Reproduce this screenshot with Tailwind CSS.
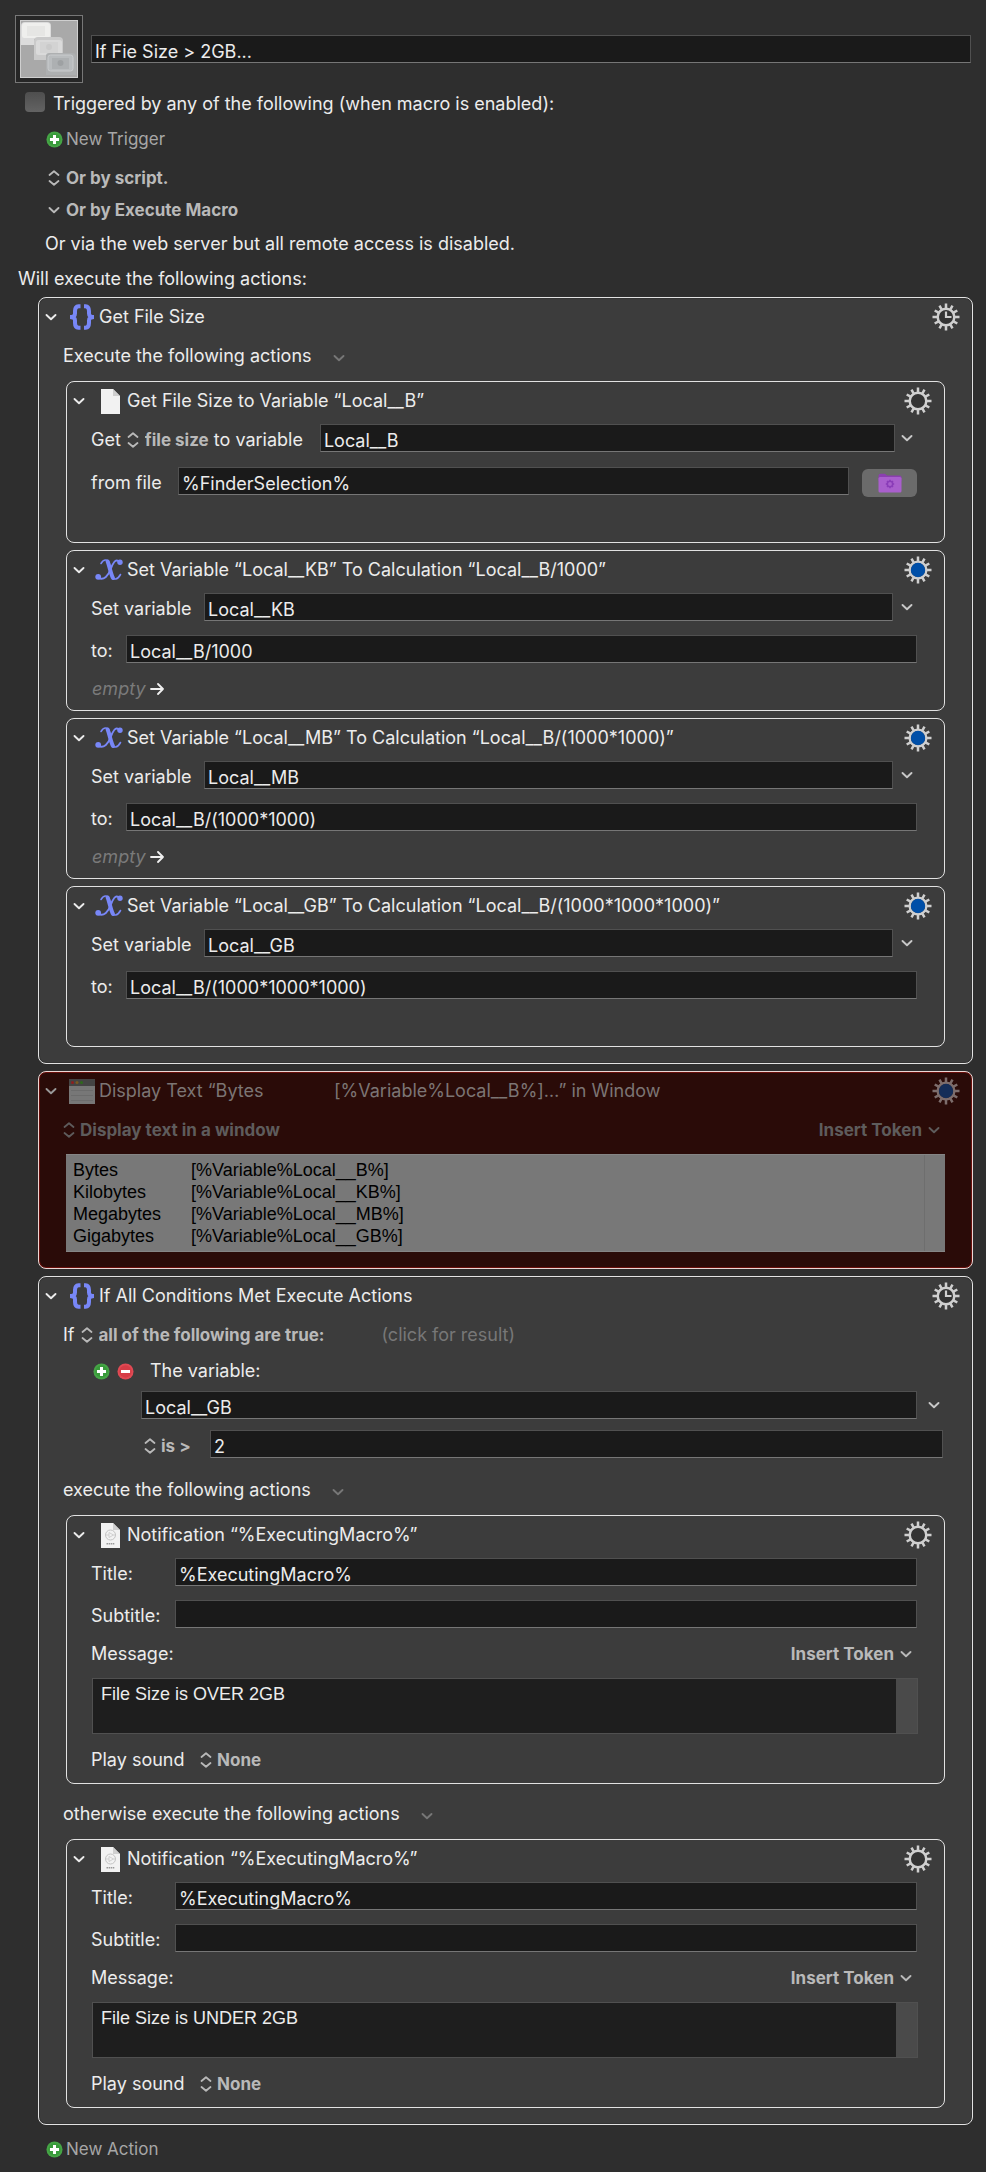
<!DOCTYPE html>
<html lang="en">
<head>
<meta charset="utf-8">
<meta name="viewport" content="width=device-width, initial-scale=1">
<title>If Fie Size &gt; 2GB...</title>
<script src="https://cdn.jsdelivr.net/npm/@tailwindcss/browser@4"></script>
</head>
<body class="bg-[#2e2e2e] font-[Inter,'Liberation_Sans',sans-serif] text-[18px] leading-6 text-[#ececec] [font-feature-settings:'calt'_0]">

<svg class="hidden" aria-hidden="true">
  <symbol id="chev" viewBox="0 0 12 8"><path d="M1.500 2 6 6.200 10.500 2" fill="none" stroke="currentColor" stroke-width="1.900" stroke-linecap="round" stroke-linejoin="round"/></symbol>
  <symbol id="updown" viewBox="0 0 12 16"><path d="M1.500 5 6 1.200l4.500 3.800M1.500 11 6 14.800l4.500-3.800" fill="none" stroke="currentColor" stroke-width="1.800" stroke-linecap="round" stroke-linejoin="round"/></symbol>
  <symbol id="braces" viewBox="0 0 26 26"><path d="M11.500 2.200H9.500Q6 2.500 6 7V9.500Q6 13 1 13Q6 13 6 16.500V19Q6 23.500 9.500 23.800H11.500M15 2.200H16.500Q20 2.500 20 7V9.500Q20 13 25 13Q20 13 20 16.500V19Q20 23.500 16.500 23.800H15" fill="none" stroke="#7887f7" stroke-width="4"/></symbol>
  <symbol id="scriptx" viewBox="0 0 28 24"><g fill="none" stroke="#7887f7" stroke-linecap="round"><path d="M6 5.500C8.500 1 13 .5 14.300 5.500L17 18C18 22.500 22.500 22 25.500 16.500" stroke-width="1.600"/><path d="M12.600 3.500C14 6 15.800 16.500 18 20" stroke-width="4"/><path d="M24.500 4C20.500-.5 17.500 6 15.500 11.500S9 23 3.500 20" stroke-width="1.900"/></g><circle cx="25" cy="4.200" r="2.700" fill="#7887f7"/><circle cx="3.200" cy="18.800" r="2.900" fill="#7887f7"/></symbol>
  <symbol id="gear" viewBox="-14 -14 28 28"><path d="M0-8.500V-13.500M0 8.500V13.500M8.500 0H13.500M-8.500 0H-13.500M4.300-7.400 6.500-11.300M7.400-4.300 11.300-6.500M-4.300-7.400-6.500-11.300M-7.400-4.300-11.300-6.500M4.300 7.400 6.500 11.300M7.400 4.300 11.300 6.500M-4.300 7.400-6.500 11.300M-7.400 4.300-11.300 6.500" stroke="#cfcfcf" stroke-width="2.500"/><circle r="8.300" fill="#333" stroke="#cfcfcf" stroke-width="2.500"/></symbol>
  <symbol id="gearclock" viewBox="-14 -14 28 28"><use href="#gear" x="-14" y="-14" width="28" height="28"/><path d="M0-5.500V0H5.500" fill="none" stroke="#cfcfcf" stroke-width="2.200"/></symbol>
  <symbol id="gearblue" viewBox="-14 -14 28 28"><use href="#gear" x="-14" y="-14" width="28" height="28"/><circle r="7.200" fill="#004fa8"/></symbol>
  <symbol id="plus" viewBox="0 0 18 18"><circle cx="9" cy="9" r="8.500" fill="#46a546"/><circle cx="9" cy="9" r="6.500" fill="#389a3a"/><path d="M9 4.200V13.800M4.200 9H13.800" stroke="#fff" stroke-width="3.200"/></symbol>
  <symbol id="minus" viewBox="0 0 18 18"><circle cx="9" cy="9" r="8.500" fill="#e04a54"/><circle cx="9" cy="9" r="6.500" fill="#d63c46"/><path d="M4.200 9H13.800" stroke="#fff" stroke-width="3.200"/></symbol>
  <symbol id="page" viewBox="0 0 19 25"><path d="M0 0H12L19 7V25H0Z" fill="#f2f2f2"/><path d="M12 0V7H19Z" fill="#cfcfcf"/></symbol>
  <symbol id="pref" viewBox="0 0 19 25"><use href="#page" width="19" height="25"/><circle cx="9.500" cy="12" r="5" fill="none" stroke="#c4c4c4"/><path d="M8 9.500 12.500 12 8 14.500ZM4.500 12H8M12.500 12H14.500" fill="none" stroke="#c8c8c8" stroke-width=".8"/><path d="M5.500 20.800H13.500" stroke="#999" stroke-width="1.600" stroke-dasharray="1.500 .6"/></symbol>
</svg>

<main class="pt-[15px] pb-2">
  <header class="flex items-center gap-2 px-[15px]">
    <button class="size-[68px] shrink-0 border border-[#777] bg-[#262626] p-[4px]" aria-label="Macro icon">
      <svg class="block size-full" viewBox="0 0 58 58"><rect width="58" height="58" fill="#a9a9a9"/><path d="M1 25V6Q1 2 5 2H27Q31 2 31 6V19H14V25Z" fill="#dcdcdc"/><rect x="2" y="3" width="28" height="15" rx="2.500" fill="#efefed"/><rect x="7" y="6" width="18" height="10" fill="#e6e6e4"/><path d="M14 40V21Q14 17 18 17H39Q43 17 43 21V34H26V40Z" fill="#cacaca"/><rect x="16" y="20" width="26" height="15" rx="2.500" fill="#dadada"/><rect x="20" y="22" width="18" height="11" fill="#d3d3d3"/><circle cx="29" cy="27" r="3" fill="#cacaca"/><path d="M26 55V36Q26 33 29 33H52Q56 33 56 37V55Z" fill="#aeb0b1"/><rect x="28" y="35" width="25" height="16" rx="2.500" fill="#b9bcbe" stroke="#c9cbcd"/><rect x="32" y="38" width="17" height="11" fill="#adb0b2"/><circle cx="40.500" cy="43" r="3" fill="#9ea1a3"/><rect x=".5" y=".5" width="57" height="57" fill="none" stroke="#cfcfcf"/></svg>
    </button>
    <input type="text" aria-label="Macro name" value="If Fie Size &gt; 2GB..." class="h-7 min-w-0 flex-1 border border-[#505050] border-b-[#767676] bg-[#1a1a1a] pt-1 pl-[3px]">
  </header>

  <section>
    <label class="mt-2 ml-[25px] flex h-[26px] items-center gap-2">
      <input type="checkbox" class="mb-1 size-5 appearance-none rounded bg-linear-to-b from-[#4e4e4e] to-[#636363]">
      Triggered by any of the following (when macro is enabled):
    </label>
    <button class="mt-[9px] ml-[46px] flex h-[26px] items-center gap-[3px] text-[17px] text-[#a6a6a6]"><svg class="size-[17px]"><use href="#plus"/></svg>New Trigger</button>
    <button class="mt-[13px] ml-[48px] flex h-[26px] items-center gap-[6px] text-[17px] font-bold text-[#b9b9b9]"><svg class="h-4 w-3"><use href="#updown"/></svg>Or by script.</button>
    <button class="mt-[6px] ml-[48px] flex h-[26px] items-center gap-[6px] text-[17px] font-bold text-[#b9b9b9]"><svg class="h-2 w-3"><use href="#chev"/></svg>Or by Execute Macro</button>
    <p class="mt-[9px] ml-[45px] h-[26px]">Or via the web server but all remote access is disabled.</p>
    <p class="mt-[9px] ml-[18px] h-[26px]">Will execute the following actions:</p>
  </section>

  <div class="mt-1 mr-[13px] ml-[38px] flex flex-col gap-[7px]">

    <!-- Group: Get File Size -->
    <section class="rounded-lg border border-[#e2e2e2] bg-[#3c3c3c] pb-4 shadow-[inset_0_0_0_1px_#343434]">
      <div class="flex h-[38px] items-center pr-3 pl-[6px]">
        <button aria-label="Collapse"><svg class="h-2 w-3"><use href="#chev"/></svg></button>
        <svg class="mr-1 ml-[12px] size-[26px]"><use href="#braces"/></svg>
        <h2 class="flex-1">Get File Size</h2>
        <button aria-label="Action menu"><svg class="block size-7"><use href="#gearclock"/></svg></button>
      </div>
      <div class="mb-[5px] flex h-10 items-center gap-[21px] pl-6">Execute the following actions
        <button aria-label="Group options" class="mt-1 text-[#777]"><svg class="block h-2 w-3"><use href="#chev"/></svg></button>
      </div>
      <div class="mx-[27px] flex flex-col gap-[7px]">

        <section class="rounded-lg border border-[#e2e2e2] bg-[#3c3c3c] pb-[47px]">
          <div class="flex h-[38px] items-center pr-3 pl-[6px]">
            <button aria-label="Collapse"><svg class="h-2 w-3"><use href="#chev"/></svg></button>
            <svg class="mr-[7px] ml-[16px] h-[25px] w-[19px]"><use href="#page"/></svg>
            <h3 class="flex-1">Get File Size to Variable “Local__B”</h3>
            <button aria-label="Action menu"><svg class="block size-7"><use href="#gear"/></svg></button>
          </div>
          <div class="mt-1 flex h-7 items-center pr-[27px] pl-6">
            <span class="pt-1">Get</span>
            <svg class="mx-[6px] mt-1 h-4 w-3 text-[#b9b9b9]"><use href="#updown"/></svg>
            <select aria-label="File attribute" class="appearance-none pt-1 text-[17px] font-bold text-[#b9b9b9]"><option>file size</option></select>
            <label for="v0" class="flex-none pt-1 pr-[17px] pl-[5px]">to variable</label>
            <input id="v0" type="text" value="Local__B" class="h-7 min-w-0 flex-1 border border-[#505050] border-b-[#767676] bg-[#1a1a1a] pt-1 pl-[3px]">
            <button aria-label="Choose variable" class="mr-1 ml-[6px] text-[#c8c8c8]"><svg class="block h-2 w-3"><use href="#chev"/></svg></button>
          </div>
          <div class="mt-[15px] flex h-7 items-center pr-[27px] pl-6">
            <label for="f0" class="w-[87px] pt-1">from file</label>
            <input id="f0" type="text" value="%FinderSelection%" class="h-7 min-w-0 flex-1 border border-[#505050] border-b-[#767676] bg-[#1a1a1a] pt-1 pl-[3px]">
            <button aria-label="Choose file" class="mt-1 ml-[13px] flex h-7 w-[55px] items-center justify-center rounded-md bg-[#6b6b6b]">
              <svg class="h-5 w-6" viewBox="0 0 24 20"><path d="M.5 3Q.5.800 2.500.800H7L9 2.500H21.500Q23.500 2.500 23.500 4.500V8H.5Z" fill="#8b3fb0"/><rect x=".5" y="4" width="23" height="15.500" rx="1.500" fill="#a95fcd"/><g fill="none" stroke="#8a3db8"><circle cx="12" cy="11" r="2.700" stroke-width="1.600"/><path d="M12 6.800V8.300M12 13.700V15.200M7.800 11H9.300M14.700 11H16.200M9 8 10 9M14 13 15 14M15 8 14 9M10 13 9 14" stroke-width="1.500"/></g></svg>
            </button>
          </div>
        </section>

        <section class="rounded-lg border border-[#e2e2e2] bg-[#3c3c3c] pb-[9px]">
          <div class="flex h-[38px] items-center pr-3 pl-[6px]">
            <button aria-label="Collapse"><svg class="h-2 w-3"><use href="#chev"/></svg></button>
            <svg class="mr-1 ml-[10px] h-6 w-7"><use href="#scriptx"/></svg>
            <h3 class="flex-1">Set Variable “Local__KB” To Calculation “Local__B/1000”</h3>
            <button aria-label="Action menu"><svg class="block size-7"><use href="#gearblue"/></svg></button>
          </div>
          <div class="mt-1 flex h-7 items-center pr-[27px] pl-6">
            <label for="v1" class="w-[113px] pt-1">Set variable</label>
            <input id="v1" type="text" value="Local__KB" class="h-7 min-w-0 flex-1 border border-[#505050] border-b-[#767676] bg-[#1a1a1a] pt-1 pl-[3px]">
            <button aria-label="Choose variable" class="mr-1 ml-2 text-[#c8c8c8]"><svg class="block h-2 w-3"><use href="#chev"/></svg></button>
          </div>
          <div class="mt-[14px] flex h-7 items-center pr-[27px] pl-6">
            <label for="c1" class="w-[35px] pt-1">to:</label>
            <input id="c1" type="text" value="Local__B/1000" class="h-7 min-w-0 flex-1 border border-[#505050] border-b-[#767676] bg-[#1a1a1a] pt-1 pl-[3px]">
          </div>
          <button class="mt-[14px] ml-[25px] flex h-6 items-center gap-1 text-[#7a7a7a] italic">empty <svg class="h-3 w-[14px]" viewBox="0 0 14 12"><path d="M1 6H13M8 1 13 6 8 11" fill="none" stroke="#f0f0f0" stroke-width="1.800" stroke-linecap="round" stroke-linejoin="round"/></svg></button>
        </section>

        <section class="rounded-lg border border-[#e2e2e2] bg-[#3c3c3c] pb-[9px]">
          <div class="flex h-[38px] items-center pr-3 pl-[6px]">
            <button aria-label="Collapse"><svg class="h-2 w-3"><use href="#chev"/></svg></button>
            <svg class="mr-1 ml-[10px] h-6 w-7"><use href="#scriptx"/></svg>
            <h3 class="flex-1">Set Variable “Local__MB” To Calculation “Local__B/(1000*1000)”</h3>
            <button aria-label="Action menu"><svg class="block size-7"><use href="#gearblue"/></svg></button>
          </div>
          <div class="mt-1 flex h-7 items-center pr-[27px] pl-6">
            <label for="v2" class="w-[113px] pt-1">Set variable</label>
            <input id="v2" type="text" value="Local__MB" class="h-7 min-w-0 flex-1 border border-[#505050] border-b-[#767676] bg-[#1a1a1a] pt-1 pl-[3px]">
            <button aria-label="Choose variable" class="mr-1 ml-2 text-[#c8c8c8]"><svg class="block h-2 w-3"><use href="#chev"/></svg></button>
          </div>
          <div class="mt-[14px] flex h-7 items-center pr-[27px] pl-6">
            <label for="c2" class="w-[35px] pt-1">to:</label>
            <input id="c2" type="text" value="Local__B/(1000*1000)" class="h-7 min-w-0 flex-1 border border-[#505050] border-b-[#767676] bg-[#1a1a1a] pt-1 pl-[3px]">
          </div>
          <button class="mt-[14px] ml-[25px] flex h-6 items-center gap-1 text-[#7a7a7a] italic">empty <svg class="h-3 w-[14px]" viewBox="0 0 14 12"><path d="M1 6H13M8 1 13 6 8 11" fill="none" stroke="#f0f0f0" stroke-width="1.800" stroke-linecap="round" stroke-linejoin="round"/></svg></button>
        </section>

        <section class="rounded-lg border border-[#e2e2e2] bg-[#3c3c3c] pb-[47px]">
          <div class="flex h-[38px] items-center pr-3 pl-[6px]">
            <button aria-label="Collapse"><svg class="h-2 w-3"><use href="#chev"/></svg></button>
            <svg class="mr-1 ml-[10px] h-6 w-7"><use href="#scriptx"/></svg>
            <h3 class="flex-1">Set Variable “Local__GB” To Calculation “Local__B/(1000*1000*1000)”</h3>
            <button aria-label="Action menu"><svg class="block size-7"><use href="#gearblue"/></svg></button>
          </div>
          <div class="mt-1 flex h-7 items-center pr-[27px] pl-6">
            <label for="v3" class="w-[113px] pt-1">Set variable</label>
            <input id="v3" type="text" value="Local__GB" class="h-7 min-w-0 flex-1 border border-[#505050] border-b-[#767676] bg-[#1a1a1a] pt-1 pl-[3px]">
            <button aria-label="Choose variable" class="mr-1 ml-2 text-[#c8c8c8]"><svg class="block h-2 w-3"><use href="#chev"/></svg></button>
          </div>
          <div class="mt-[14px] flex h-7 items-center pr-[27px] pl-6">
            <label for="c3" class="w-[35px] pt-1">to:</label>
            <input id="c3" type="text" value="Local__B/(1000*1000*1000)" class="h-7 min-w-0 flex-1 border border-[#505050] border-b-[#767676] bg-[#1a1a1a] pt-1 pl-[3px]">
          </div>
        </section>
      </div>
    </section>

    <!-- Disabled action: Display Text -->
    <section class="rounded-lg border border-[#ecd8d6] bg-[#2a0b08] pb-4 text-[#7c7574] shadow-[inset_0_0_0_1px_#6a0f0b]">
      <div class="flex h-[38px] items-center pr-3 pl-[6px]">
        <button aria-label="Collapse" class="text-[#999]"><svg class="h-2 w-3"><use href="#chev"/></svg></button>
        <svg class="mr-1 ml-[12px] h-[25px] w-[26px]" viewBox="0 0 26 25"><rect width="26" height="25" fill="#777"/><rect width="26" height="7" fill="#444"/><circle cx="3.500" cy="3.500" r="1.500" fill="#8e1e1e"/><circle cx="8" cy="3.500" r="1.500" fill="#7a5a20"/><circle cx="12.500" cy="3.500" r="1.500" fill="#2f6a1c"/><path d="M2 11.500H24M2 16.500H24M2 21.500H24" stroke="#6c6c6c"/></svg>
        <h2 class="flex-1 whitespace-pre [tab-size:235px]">Display Text “Bytes	[%Variable%Local__B%]…” in Window</h2>
        <button aria-label="Action menu" class="opacity-50"><svg class="block size-7"><use href="#gearblue"/></svg></button>
      </div>
      <div class="flex h-10 items-center pr-8 pl-6 text-[17px] font-bold text-[#5e5c5c]">
        <svg class="mr-[5px] h-4 w-3"><use href="#updown"/></svg>
        <select aria-label="Display mode" class="appearance-none"><option>Display text in a window</option></select>
        <button class="ml-auto flex items-center gap-[6px]">Insert Token<svg class="h-2 w-3"><use href="#chev"/></svg></button>
      </div>
      <div class="mx-[27px] mt-1 flex h-[98px] border-y border-[#858585] bg-[#787878]">
        <textarea aria-label="Text to display" class="block flex-1 resize-none overflow-hidden pt-1 pl-[7px] font-['Liberation_Sans',Arial,sans-serif] text-[18px] leading-[22px] text-black [tab-size:118px]">Bytes	[%Variable%Local__B%]
Kilobytes	[%Variable%Local__KB%]
Megabytes	[%Variable%Local__MB%]
Gigabytes	[%Variable%Local__GB%]</textarea>
        <div class="w-[21px] border-l border-[#6e6e6e]"></div>
      </div>
    </section>

    <!-- Conditional -->
    <section class="rounded-lg border border-[#e2e2e2] bg-[#3c3c3c] pb-4 shadow-[inset_0_0_0_1px_#343434]">
      <div class="flex h-[38px] items-center pr-3 pl-[6px]">
        <button aria-label="Collapse"><svg class="h-2 w-3"><use href="#chev"/></svg></button>
        <svg class="mr-1 ml-[12px] size-[26px]"><use href="#braces"/></svg>
        <h2 class="flex-1">If All Conditions Met Execute Actions</h2>
        <button aria-label="Action menu"><svg class="block size-7"><use href="#gearclock"/></svg></button>
      </div>
      <div class="flex h-10 items-center pl-6">If
        <svg class="mx-[6px] h-4 w-3 text-[#b9b9b9]"><use href="#updown"/></svg>
        <select aria-label="Match mode" class="w-[283px] appearance-none text-[17px] font-bold text-[#b9b9b9]"><option>all of the following are true:</option></select>
        <button class="text-[#777]">(click for result)</button>
      </div>
      <div class="flex h-8 items-center pl-[54px]">
        <button aria-label="Add condition"><svg class="block size-[17px]"><use href="#plus"/></svg></button>
        <button aria-label="Remove condition" class="ml-[7px]"><svg class="block size-[17px]"><use href="#minus"/></svg></button>
        <label for="cv" class="ml-4">The variable:</label>
      </div>
      <div class="mt-1 flex h-7 items-center pr-8 pl-[102px]">
        <input id="cv" type="text" value="Local__GB" class="h-7 min-w-0 flex-1 border border-[#505050] border-b-[#767676] bg-[#1a1a1a] pt-1 pl-[3px]">
        <button aria-label="Choose variable" class="ml-[11px] text-[#c8c8c8]"><svg class="block h-2 w-3"><use href="#chev"/></svg></button>
      </div>
      <div class="mt-[11px] flex h-7 items-center pr-[29px] pl-[105px] text-[#b9b9b9]">
        <svg class="mt-1 mr-[5px] h-4 w-3"><use href="#updown"/></svg>
        <select aria-label="Comparison" class="w-[49px] appearance-none pt-1 text-[17px] font-bold"><option>is &gt;</option></select>
        <input type="text" aria-label="Compare value" value="2" class="h-7 min-w-0 flex-1 border border-[#505050] border-b-[#767676] bg-[#1a1a1a] pt-1 pl-[3px] text-[#ececec]">
      </div>
      <div class="mt-3 mb-[5px] flex h-10 items-center gap-[21px] pl-6">execute the following actions
        <button aria-label="Group options" class="mt-1 text-[#777]"><svg class="block h-2 w-3"><use href="#chev"/></svg></button>
      </div>

      <section class="mx-[27px] rounded-lg border border-[#e2e2e2] bg-[#3c3c3c] pb-[11px]">
        <div class="flex h-[38px] items-center pr-3 pl-[6px]">
          <button aria-label="Collapse"><svg class="h-2 w-3"><use href="#chev"/></svg></button>
          <svg class="mr-[7px] ml-[16px] h-[25px] w-[19px]"><use href="#pref"/></svg>
          <h3 class="flex-1">Notification “%ExecutingMacro%”</h3>
          <button aria-label="Action menu"><svg class="block size-7"><use href="#gear"/></svg></button>
        </div>
        <div class="mt-1 flex h-7 items-center pr-[27px] pl-6">
          <label for="t1" class="w-[84px] pt-1">Title:</label>
          <input id="t1" type="text" value="%ExecutingMacro%" class="h-7 min-w-0 flex-1 border border-[#505050] border-b-[#767676] bg-[#1a1a1a] pt-1 pl-[3px]">
        </div>
        <div class="mt-[14px] flex h-7 items-center pr-[27px] pl-6">
          <label for="s1" class="w-[84px] pt-1">Subtitle:</label>
          <input id="s1" type="text" value="" class="h-7 min-w-0 flex-1 border border-[#505050] border-b-[#767676] bg-[#1a1a1a] pt-1 pl-[3px]">
        </div>
        <div class="mt-[14px] flex h-6 items-center justify-between pr-8 pl-6">
          <label for="m1">Message:</label>
          <button class="flex items-center gap-[6px] text-[17px] font-bold text-[#b9b9b9]">Insert Token<svg class="h-2 w-3"><use href="#chev"/></svg></button>
        </div>
        <div class="mt-3 mr-[26px] ml-[25px] flex h-14 border border-[#505050] bg-[#1e1e1e]">
          <textarea id="m1" class="block flex-1 resize-none overflow-hidden pt-1 pl-2 font-['Liberation_Sans',Arial,sans-serif] text-[18px] leading-[22px]">File Size is OVER 2GB</textarea>
          <div class="w-[21px] bg-[#4a4a4a]"></div>
        </div>
        <div class="mt-[14px] flex h-6 items-center pl-6">
          <label for="p1" class="w-[109px]">Play sound</label>
          <svg class="mr-[5px] h-4 w-3 text-[#b9b9b9]"><use href="#updown"/></svg>
          <select id="p1" class="appearance-none text-[17px] font-bold text-[#b9b9b9]"><option>None</option></select>
        </div>
      </section>

      <div class="mt-[10px] mb-[5px] flex h-10 items-center gap-[21px] pl-6">otherwise execute the following actions
        <button aria-label="Group options" class="mt-1 text-[#777]"><svg class="block h-2 w-3"><use href="#chev"/></svg></button>
      </div>

      <section class="mx-[27px] rounded-lg border border-[#e2e2e2] bg-[#3c3c3c] pb-[11px]">
        <div class="flex h-[38px] items-center pr-3 pl-[6px]">
          <button aria-label="Collapse"><svg class="h-2 w-3"><use href="#chev"/></svg></button>
          <svg class="mr-[7px] ml-[16px] h-[25px] w-[19px]"><use href="#pref"/></svg>
          <h3 class="flex-1">Notification “%ExecutingMacro%”</h3>
          <button aria-label="Action menu"><svg class="block size-7"><use href="#gear"/></svg></button>
        </div>
        <div class="mt-1 flex h-7 items-center pr-[27px] pl-6">
          <label for="t2" class="w-[84px] pt-1">Title:</label>
          <input id="t2" type="text" value="%ExecutingMacro%" class="h-7 min-w-0 flex-1 border border-[#505050] border-b-[#767676] bg-[#1a1a1a] pt-1 pl-[3px]">
        </div>
        <div class="mt-[14px] flex h-7 items-center pr-[27px] pl-6">
          <label for="s2" class="w-[84px] pt-1">Subtitle:</label>
          <input id="s2" type="text" value="" class="h-7 min-w-0 flex-1 border border-[#505050] border-b-[#767676] bg-[#1a1a1a] pt-1 pl-[3px]">
        </div>
        <div class="mt-[14px] flex h-6 items-center justify-between pr-8 pl-6">
          <label for="m2">Message:</label>
          <button class="flex items-center gap-[6px] text-[17px] font-bold text-[#b9b9b9]">Insert Token<svg class="h-2 w-3"><use href="#chev"/></svg></button>
        </div>
        <div class="mt-3 mr-[26px] ml-[25px] flex h-14 border border-[#505050] bg-[#1e1e1e]">
          <textarea id="m2" class="block flex-1 resize-none overflow-hidden pt-1 pl-2 font-['Liberation_Sans',Arial,sans-serif] text-[18px] leading-[22px]">File Size is UNDER 2GB</textarea>
          <div class="w-[21px] bg-[#4a4a4a]"></div>
        </div>
        <div class="mt-[14px] flex h-6 items-center pl-6">
          <label for="p2" class="w-[109px]">Play sound</label>
          <svg class="mr-[5px] h-4 w-3 text-[#b9b9b9]"><use href="#updown"/></svg>
          <select id="p2" class="appearance-none text-[17px] font-bold text-[#b9b9b9]"><option>None</option></select>
        </div>
      </section>
    </section>
  </div>

  <button class="mt-[11px] ml-[46px] flex h-[26px] items-center gap-[3px] text-[17px] text-[#a6a6a6]"><svg class="size-[17px]"><use href="#plus"/></svg>New Action</button>
</main>
</body>
</html>
